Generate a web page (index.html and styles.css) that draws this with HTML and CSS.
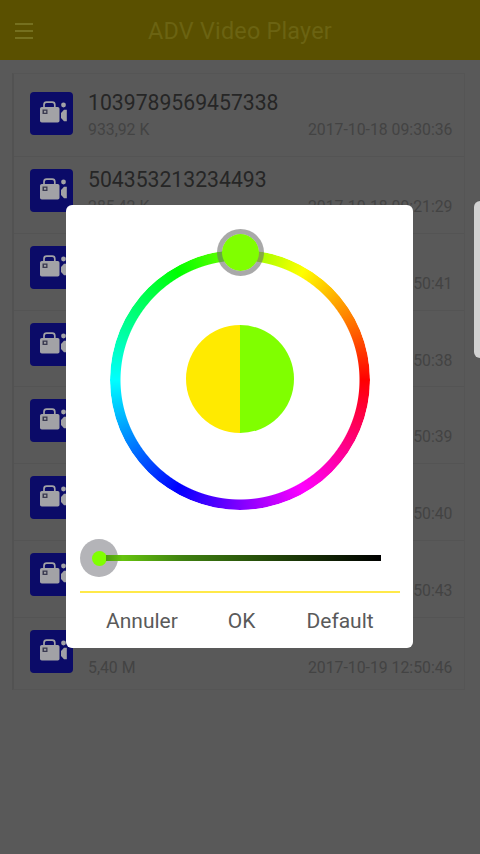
FILE: index.html
```html
<!DOCTYPE html>
<html lang="fr">
<head>
<meta charset="utf-8">
<title>ADV Video Player</title>
<link rel="stylesheet" href="styles.css">
</head>
<body>
<svg class="sprite" width="0" height="0" aria-hidden="true">
  <symbol id="cam" viewBox="0 0 43 43">
    <path d="M14 15v-2.2q0-2.6 2.6-2.6h5.6q2.6 0 2.6 2.6v2.2" fill="none" stroke="#a2a2a6" stroke-width="1.7"/>
    <rect x="10" y="15" width="19.5" height="15.5" rx="1.8" fill="#a2a2a6"/>
    <rect x="12.5" y="17.5" width="5" height="4.5" fill="#3a3a50"/>
    <rect x="14" y="18.8" width="2.2" height="1.9" fill="#a2a2a6"/>
    <circle cx="33.5" cy="13" r="2.4" fill="#a2a2a6"/>
    <path d="M31 21l3-3.2h2.8v11.4h-2.8l-3-3.2z" fill="#a2a2a6"/>
  </symbol>
</svg>

<header class="topbar">
  <span class="menu"><i></i><i></i><i></i></span>
  <h1 class="title">ADV Video Player</h1>
</header>

<main class="list">
  <div class="row"><svg class="thumb"><use href="#cam"/></svg><div class="info"><div class="name">1039789569457338</div><div class="meta"><span>933,92 K</span><span>2017-10-18 09:30:36</span></div></div></div>
  <div class="row"><svg class="thumb"><use href="#cam"/></svg><div class="info"><div class="name">504353213234493</div><div class="meta"><span>285,42 K</span><span>2017-10-18 09:21:29</span></div></div></div>
  <div class="row"><svg class="thumb"><use href="#cam"/></svg><div class="info"><div class="name">VID-20171019-WA0001</div><div class="meta"><span>5,12 M</span><span>2017-10-19 12:50:41</span></div></div></div>
  <div class="row"><svg class="thumb"><use href="#cam"/></svg><div class="info"><div class="name">VID-20171019-WA0002</div><div class="meta"><span>5,20 M</span><span>2017-10-19 12:50:38</span></div></div></div>
  <div class="row"><svg class="thumb"><use href="#cam"/></svg><div class="info"><div class="name">VID-20171019-WA0003</div><div class="meta"><span>5,31 M</span><span>2017-10-19 12:50:39</span></div></div></div>
  <div class="row"><svg class="thumb"><use href="#cam"/></svg><div class="info"><div class="name">VID-20171019-WA0004</div><div class="meta"><span>5,28 M</span><span>2017-10-19 12:50:40</span></div></div></div>
  <div class="row"><svg class="thumb"><use href="#cam"/></svg><div class="info"><div class="name">VID-20171019-WA0006</div><div class="meta"><span>5,36 M</span><span>2017-10-19 12:50:43</span></div></div></div>
  <div class="row"><svg class="thumb"><use href="#cam"/></svg><div class="info"><div class="name">VID-20171019-WA0005</div><div class="meta"><span>5,40 M</span><span>2017-10-19 12:50:46</span></div></div></div>
</main>

<div class="side-handle"></div>

<section class="dialog">
  <div class="wheel">
    <div class="ring"></div>
    <div class="ring-thumb"></div>
    <div class="preview"><span class="old"></span><span class="new"></span></div>
  </div>
  <div class="slider">
    <div class="knob"><span></span></div>
    <div class="track"></div>
  </div>
  <div class="rule"></div>
  <div class="actions">
    <span class="act-cancel">Annuler</span>
    <span class="act-ok">OK</span>
    <span class="act-default">Default</span>
  </div>
</section>
</body>
</html>
```
FILE: styles.css
```css
* { box-sizing: border-box; }
html, body { margin: 0; height: 100%; }
body {
  position: relative;
  width: 480px;
  height: 854px;
  overflow: hidden;
  background: #595959;
  font-family: Roboto, "Liberation Sans", sans-serif;
}
.sprite { position: absolute; }

.topbar {
  height: 60px;
  background: #5a5000;
  display: flex;
  align-items: center;
  justify-content: center;
  position: relative;
}
.title {
  margin: 0;
  font-size: 23.4px;
  font-weight: 400;
  color: #6b6312;
  letter-spacing: 0.2px;
  position: relative;
  top: 1px;
}
.menu {
  position: absolute;
  left: 15px;
  top: 23px;
  width: 18px;
  display: flex;
  flex-direction: column;
  gap: 5px;
}
.menu i { display: block; height: 2px; background: #75701f; }

.list {
  margin: 13px 15px 0 12px;
  padding: 6px 0 0 0;
  height: 617px;
  border: 1px solid #555;
  border-left: 2px solid #525252;
}
.row {
  height: 76.86px;
  padding: 12px 11.5px 0 16px;
  display: flex;
  gap: 15px;
  border-bottom: 1px solid #545454;
}
.row:last-child { border-bottom: 0; }
.thumb {
  flex: none;
  width: 43px;
  height: 43px;
  border-radius: 4px;
  background: #0b0b68;
}
.info { flex: 1; min-width: 0; }
.name {
  font-size: 21.2px;
  line-height: 22px;
  color: #262626;
  white-space: nowrap;
}
.meta {
  display: flex;
  justify-content: space-between;
  font-size: 15.8px;
  line-height: 20px;
  margin-top: 6px;
  color: #434343;
}

.side-handle {
  position: absolute;
  left: 474px;
  top: 201px;
  width: 12px;
  height: 157px;
  border-radius: 6px;
  background: #d2d2d2;
}

.dialog {
  position: absolute;
  left: 66px;
  top: 205px;
  width: 347px;
  height: 443px;
  background: #fff;
  border-radius: 6px;
  padding: 24px 14px 0;
  display: flex;
  flex-direction: column;
}
.wheel {
  position: relative;
  width: 260px;
  height: 260px;
  margin: 21px auto 0 auto;
  display: flex;
  align-items: center;
  justify-content: center;
}
.ring {
  position: absolute;
  inset: 0;
  border-radius: 50%;
  background: conic-gradient(from 30deg, #ffff00, #ff0000 60deg, #ff00ff 120deg, #0000ff 180deg, #00ffff 240deg, #00ff00 300deg, #ffff00 360deg);
  -webkit-mask: radial-gradient(closest-side, transparent 119px, #000 120px);
  mask: radial-gradient(closest-side, transparent 119px, #000 120px);
}
.ring-thumb {
  position: absolute;
  left: 107px;
  top: -21px;
  width: 47px;
  height: 47px;
  border-radius: 50%;
  background: #80ff00 content-box;
  padding: 5px;
  box-shadow: inset 0 0 0 5px rgba(112, 112, 112, 0.6);
}
.preview {
  width: 108px;
  height: 108px;
  border-radius: 50%;
  overflow: hidden;
  display: flex;
  margin-top: -2px;
}
.preview span { flex: 1; }
.old { background: #ffea00; }
.new { background: #80ff00; }

.slider {
  position: relative;
  height: 38px;
  margin-top: 29px;
  display: flex;
  align-items: center;
}
.track {
  position: relative;
  margin-left: 26px;
  width: 275px;
  height: 6px;
  background: linear-gradient(90deg, #4f9a10 0%, #66c40e 6%, #3f8010 28%, #000 100%);
}
.knob {
  position: absolute;
  left: 0;
  top: 0;
  width: 38px;
  height: 38px;
  border-radius: 50%;
  background: #b4b4b8;
  display: flex;
  align-items: center;
  justify-content: center;
}
.knob span {
  width: 15px;
  height: 15px;
  border-radius: 50%;
  background: #80ff00;
}

.rule {
  margin-top: 14px;
  height: 2px;
  width: 320px;
  background: #ffe94a;
}

.actions {
  display: flex;
  height: 55px;
  align-items: center;
  font-size: 21px;
  line-height: 20px;
  color: #5a5a5a;
}
.act-cancel { margin-left: 26px; }
.act-ok { margin-left: 50px; }
.act-default { margin-left: 51px; }
```
